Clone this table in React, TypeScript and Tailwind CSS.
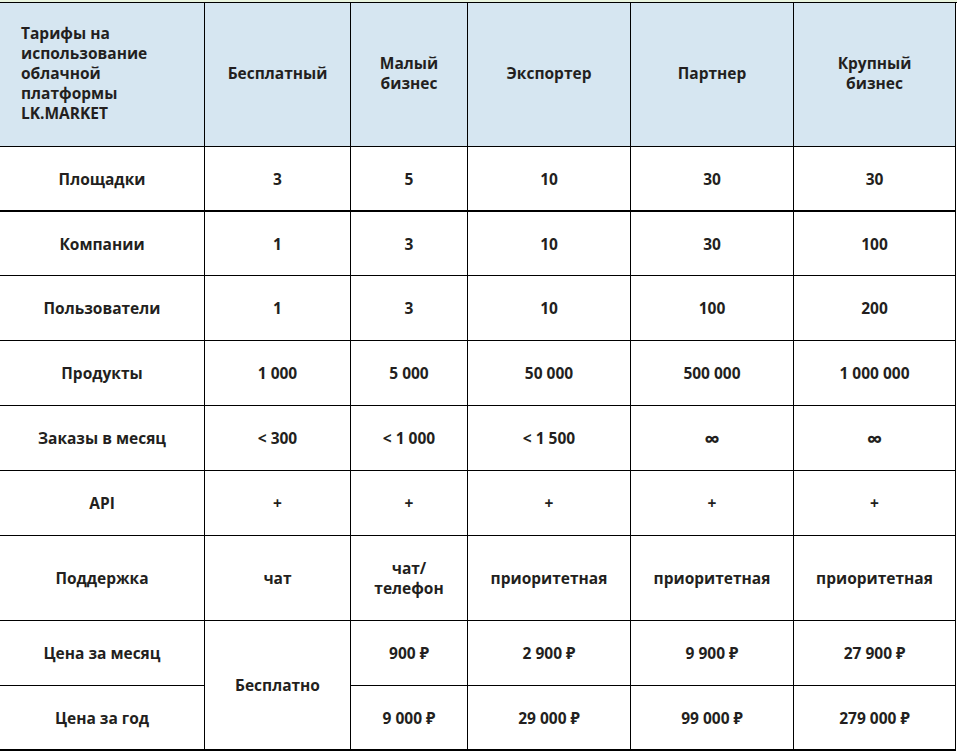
import React from "react";

const rows: { label: string; values: string[]; h: string; thick?: boolean }[] = [
  { label: "Площадки", values: ["3", "5", "10", "30", "30"], h: "h-[65px]", thick: true },
  { label: "Компании", values: ["1", "3", "10", "30", "100"], h: "h-[64px]" },
  { label: "Пользователи", values: ["1", "3", "10", "100", "200"], h: "h-[65px]" },
  { label: "Продукты", values: ["1 000", "5 000", "50 000", "500 000", "1 000 000"], h: "h-[65px]" },
  { label: "Заказы в месяц", values: ["< 300", "< 1 000", "< 1 500", "∞", "∞"], h: "h-[65px]" },
  { label: "API", values: ["+", "+", "+", "+", "+"], h: "h-[65px]" },
];

const plans = ["Бесплатный", "Малый\nбизнес", "Экспортер", "Партнер", "Крупный\nбизнес"];

const cell = "flex items-center justify-center text-center border-r border-b border-black px-2";

export default function App() {
  return (
    <div
      className="w-[957px] h-[751px] bg-white text-[#231f20] text-[15.5px] leading-[20px] font-bold overflow-hidden"
      style={{ fontFamily: '"Open Sans", "Noto Sans", sans-serif' }}
    >
      <div className="h-[2px] bg-[#e9f4df]" />
      <div className="grid grid-cols-[205px_146px_117px_163px_163px_162px] border-t border-black">
        {/* header */}
        <div className="h-[144px] bg-[#d6e6f1] border-r border-b border-black flex items-center pl-[21px] pr-2 pb-[3px]">
          <div>
            Тарифы на
            <br />
            использование
            <br />
            облачной
            <br />
            платформы
            <br />
            LK.MARKET
          </div>
        </div>
        {plans.map((p) => (
          <div key={p} className={`${cell} h-[144px] bg-[#d6e6f1] whitespace-pre-line pb-[3px]`}>
            {p}
          </div>
        ))}

        {rows.map((r) => (
          <React.Fragment key={r.label}>
            <div className={`${cell} ${r.h} ${r.thick ? "border-b-2" : ""}`}>{r.label}</div>
            {r.values.map((v, i) => (
              <div
                key={i}
                className={`${cell} ${r.h} ${r.thick ? "border-b-2" : ""} ${v === "∞" ? "text-[22px]" : ""}`}
              >
                {v}
              </div>
            ))}
          </React.Fragment>
        ))}

        {/* support */}
        <div className={`${cell} h-[85px]`}>Поддержка</div>
        <div className={`${cell} h-[85px]`}>чат</div>
        <div className={`${cell} h-[85px]`}>
          чат/
          <br />
          телефон
        </div>
        <div className={`${cell} h-[85px]`}>приоритетная</div>
        <div className={`${cell} h-[85px]`}>приоритетная</div>
        <div className={`${cell} h-[85px]`}>приоритетная</div>

        {/* prices */}
        <div className={`${cell} h-[65px]`}>Цена за месяц</div>
        <div className={`${cell} row-span-2 border-b-2`}>Бесплатно</div>
        <div className={`${cell} h-[65px]`}>900 ₽</div>
        <div className={`${cell} h-[65px]`}>2 900 ₽</div>
        <div className={`${cell} h-[65px]`}>9 900 ₽</div>
        <div className={`${cell} h-[65px]`}>27 900 ₽</div>

        <div className={`${cell} h-[65px] border-b-2`}>Цена за год</div>
        <div className={`${cell} h-[65px] border-b-2`}>9 000 ₽</div>
        <div className={`${cell} h-[65px] border-b-2`}>29 000 ₽</div>
        <div className={`${cell} h-[65px] border-b-2`}>99 000 ₽</div>
        <div className={`${cell} h-[65px] border-b-2`}>279 000 ₽</div>
      </div>
    </div>
  );
}
